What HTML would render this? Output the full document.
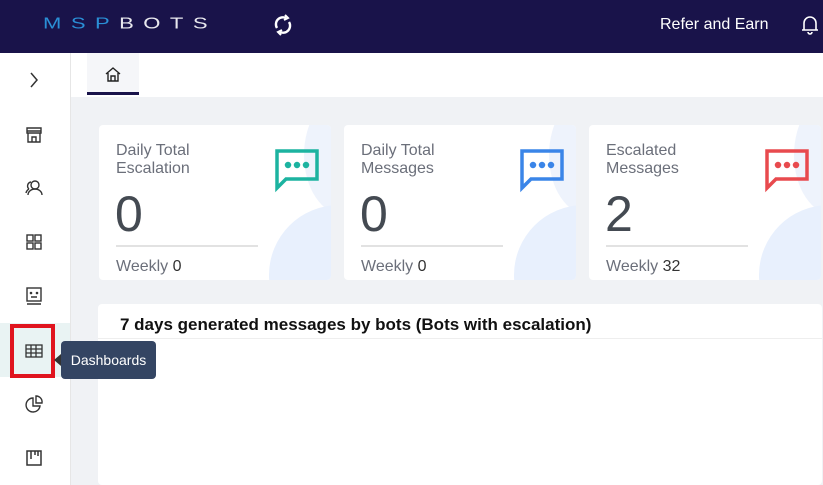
<!DOCTYPE html>
<html><head><meta charset="utf-8"><style>
*{margin:0;padding:0;box-sizing:border-box}
body{width:823px;height:485px;overflow:hidden;font-family:"Liberation Sans",Arial,sans-serif;background:#f0f2f5;position:relative}
.hdr{position:absolute;left:0;top:0;width:823px;height:53px;background:#19134a}
.logo{position:absolute;left:43px;top:12px;font-size:21px;letter-spacing:9px;font-weight:normal;color:#e8e8ee;transform:scale(1.05,0.75);transform-origin:left center}
.logo b{color:#2a8fd6;font-weight:normal}
.refer{position:absolute;left:660px;top:16px;color:#fff;font-size:16px}
.side{position:absolute;left:0;top:53px;width:71px;height:432px;background:#fff;border-right:1px solid #e6e6e6}
.ic{position:absolute;left:24px;width:20px;height:20px}
.tabs{position:absolute;left:71px;top:53px;width:752px;height:44px;background:#fff}
.tab{position:absolute;left:16px;top:0;width:52px;height:42px;background:#f5f6f9;border-bottom:3px solid #19134a}
.card{position:absolute;top:125px;width:232px;height:155px;background:#fff;border-radius:4px;overflow:hidden}
.card .t{position:absolute;left:17px;top:17px;font-size:16px;color:#6b6f7a;line-height:18px}
.card .n{position:absolute;left:16px;top:60px;font-size:50px;color:#444a52}
.card .l{position:absolute;left:17px;top:120px;width:142px;height:2px;background:#e2e2e2}
.card .w{position:absolute;left:17px;top:133px;font-size:16px;color:#6b6f7a}
.card .w span{color:#333}
.card .c{position:absolute;left:170px;top:80px;width:140px;height:140px;border-radius:50%;background:#e8f0fd}
.card .c2{position:absolute;left:205px;top:-30px;width:80px;height:120px;border-radius:50%;background:#eef3fc}
.card svg{position:absolute;left:175px;top:23px}
.chart{position:absolute;left:98px;top:304px;width:724px;height:181px;background:#fff;border-radius:4px}
.chart h3{position:absolute;left:22px;top:11px;font-size:17px;color:#111}
.chart .ln{position:absolute;left:0;top:34px;width:724px;height:1px;background:#eee}
.tip{z-index:10}
</style></head><body>
<div class="hdr">
<div class="logo"><b>MSP</b>BOTS</div>
<svg style="position:absolute;left:273px;top:14px" width="20" height="22" viewBox="0 0 20 22" fill="none" stroke="#fff" stroke-width="2.4"><path d="M4 14 A7 7 0 0 1 13 4"/><path d="M16 8 A7 7 0 0 1 7 18"/><path d="M12 1 L15 4 L11 6" stroke-width="2"/><path d="M8 21 L5 18 L9 16" stroke-width="2"/></svg>
<div class="refer">Refer and Earn</div>
<svg style="position:absolute;left:800px;top:14px" width="20" height="22" viewBox="0 0 20 22" fill="none" stroke="#fff" stroke-width="1.6"><path d="M4 16 V9 A6 6 0 0 1 16 9 V16 H2 H18"/><path d="M8 18 A2 2 0 0 0 12 18"/></svg>
</div>
<div class="side">
<svg class="ic" style="top:17px" viewBox="0 0 20 20" fill="none" stroke="#333" stroke-width="1.5"><path d="M7 3 L13 10 L7 17"/></svg>
<svg class="ic" style="top:72px" viewBox="0 0 20 20" fill="none" stroke="#333" stroke-width="1.4"><path d="M3 3h14v5H3zM4 8v9h12V8M8 17v-5h4v5M3 6h14"/></svg>
<svg class="ic" style="top:125px" viewBox="0 0 20 20" fill="none" stroke="#333" stroke-width="1.4"><circle cx="11" cy="7" r="4"/><path d="M4 17a7 6 0 0 1 14 0M7 4a4 4 0 0 0 -2 7M2 15a6 6 0 0 1 3-4"/></svg>
<svg class="ic" style="top:179px" viewBox="0 0 20 20" fill="none" stroke="#333" stroke-width="1.4"><rect x="3" y="3" width="6" height="6"/><rect x="11" y="3" width="6" height="6"/><rect x="3" y="11" width="6" height="6"/><rect x="11" y="11" width="6" height="6"/></svg>
<svg class="ic" style="top:233px" viewBox="0 0 20 20" fill="none" stroke="#333" stroke-width="1.4"><rect x="3" y="2" width="14" height="13"/><path d="M3 18h14M7 11h6"/><circle cx="7" cy="7" r=".6"/><circle cx="13" cy="7" r=".6"/></svg>
<div style="position:absolute;left:0;top:270px;width:70px;height:54px;background:#e9f3f3"></div>
<div style="position:absolute;left:10px;top:271px;width:45px;height:54px;border:4px solid #e0141e"></div>
<svg class="ic" style="top:288px" viewBox="0 0 20 20" fill="none" stroke="#333" stroke-width="1.3"><rect x="2" y="4" width="16" height="12"/><path d="M2 8h16M2 12h16M7 4v12M12 4v12"/></svg>
<svg class="ic" style="top:341px" viewBox="0 0 20 20" fill="none" stroke="#333" stroke-width="1.4"><path d="M9 4a7 7 0 1 0 7 8H9z"/><path d="M12 2a6 6 0 0 1 6 7h-6z"/></svg>
<svg class="ic" style="top:395px" viewBox="0 0 20 20" fill="none" stroke="#333" stroke-width="1.5"><rect x="3" y="3" width="14" height="14"/><path d="M7 3v8M11 3v4M14 3v5"/></svg>
</div>
<div class="tabs"><div class="tab"><svg style="position:absolute;left:17px;top:13px" width="18" height="17" viewBox="0 0 18 17" fill="none" stroke="#222" stroke-width="1.4"><path d="M2 8L9 2l7 6M4 7v8h10V7M7 15v-5h4v5"/></svg></div></div>
<div class="card" style="left:99px"><div class="c2"></div><div class="c"></div><div class="t">Daily Total<br>Escalation</div><div class="n">0</div><div class="l"></div><div class="w">Weekly <span>0</span></div>
<svg width="48" height="46" viewBox="0 0 48 46" fill="none" stroke="#1cb3a0" stroke-width="3.5"><path d="M3 3h40v28H12l-9 9z"/><circle cx="14" cy="17" r="1.5" fill="#1cb3a0"/><circle cx="23" cy="17" r="1.5" fill="#1cb3a0"/><circle cx="32" cy="17" r="1.5" fill="#1cb3a0"/></svg></div>
<div class="card" style="left:344px"><div class="c2"></div><div class="c"></div><div class="t">Daily Total<br>Messages</div><div class="n">0</div><div class="l"></div><div class="w">Weekly <span>0</span></div>
<svg width="48" height="46" viewBox="0 0 48 46" fill="none" stroke="#3a85e8" stroke-width="3.5"><path d="M3 3h40v28H12l-9 9z"/><circle cx="14" cy="17" r="1.5" fill="#3a85e8"/><circle cx="23" cy="17" r="1.5" fill="#3a85e8"/><circle cx="32" cy="17" r="1.5" fill="#3a85e8"/></svg></div>
<div class="card" style="left:589px"><div class="c2"></div><div class="c"></div><div class="t">Escalated<br>Messages</div><div class="n">2</div><div class="l"></div><div class="w">Weekly <span>32</span></div>
<svg width="48" height="46" viewBox="0 0 48 46" fill="none" stroke="#e84a4e" stroke-width="3.5"><path d="M3 3h40v28H12l-9 9z"/><circle cx="14" cy="17" r="1.5" fill="#e84a4e"/><circle cx="23" cy="17" r="1.5" fill="#e84a4e"/><circle cx="32" cy="17" r="1.5" fill="#e84a4e"/></svg></div>
<div class="chart"><h3>7 days generated messages by bots (Bots with escalation)</h3><div class="ln"></div></div>
<div class="tip" style="position:absolute;left:54px;top:354px;width:0;height:0;border-top:6px solid transparent;border-bottom:6px solid transparent;border-right:7px solid #333"></div>
<div class="tip" style="position:absolute;left:61px;top:341px;width:95px;height:38px;background:#344563;border-radius:4px;color:#fff;font-size:14px;line-height:38px;text-align:center">Dashboards</div>
</body></html>
